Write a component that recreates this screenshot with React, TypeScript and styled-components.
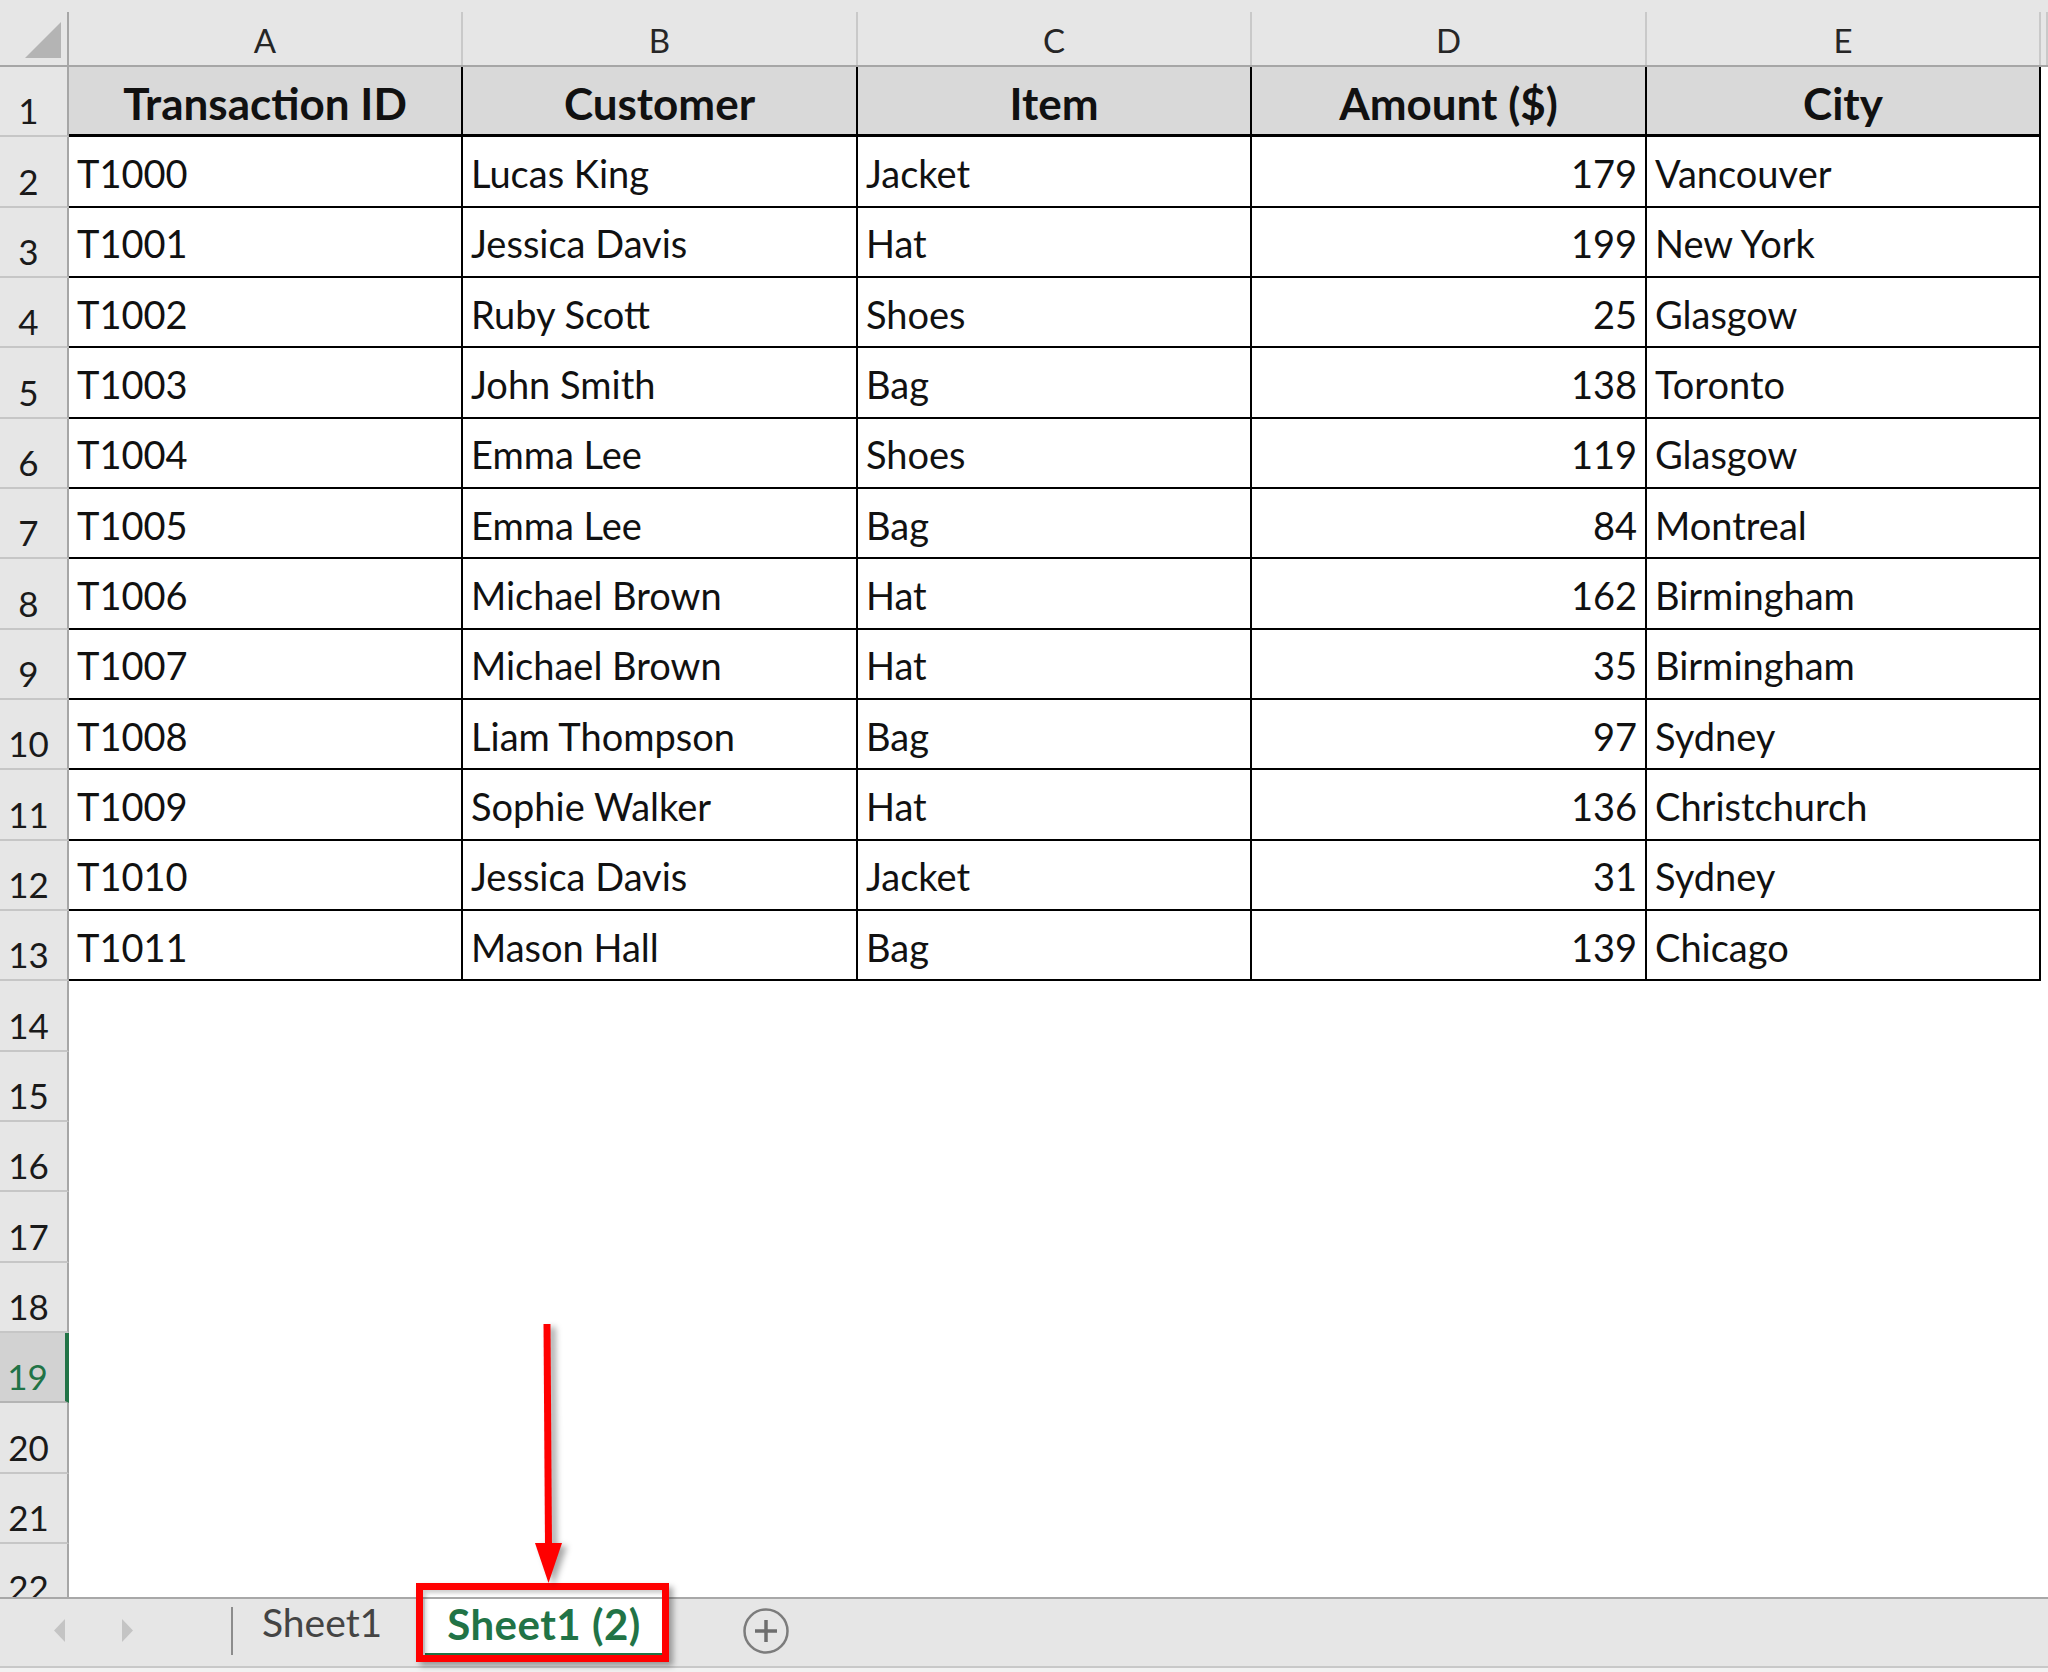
import styled, { createGlobalStyle } from "styled-components";

const GlobalStyle = createGlobalStyle`
  html, body {
    margin: 0;
    padding: 0;
    background: #ffffff;
  }
  body {
    font-family: Lato, "Open Sans", sans-serif;
  }
`;

const COLUMNS = "69px 394px 395px 394px 395px 394px 1fr";
const ROW_H = 70.33;
const TOTAL_ROWS = 22;

const letters = ["A", "B", "C", "D", "E"];
const headers = ["Transaction ID", "Customer", "Item", "Amount ($)", "City"];

const rows: [string, string, string, number, string][] = [
  ["T1000", "Lucas King", "Jacket", 179, "Vancouver"],
  ["T1001", "Jessica Davis", "Hat", 199, "New York"],
  ["T1002", "Ruby Scott", "Shoes", 25, "Glasgow"],
  ["T1003", "John Smith", "Bag", 138, "Toronto"],
  ["T1004", "Emma Lee", "Shoes", 119, "Glasgow"],
  ["T1005", "Emma Lee", "Bag", 84, "Montreal"],
  ["T1006", "Michael Brown", "Hat", 162, "Birmingham"],
  ["T1007", "Michael Brown", "Hat", 35, "Birmingham"],
  ["T1008", "Liam Thompson", "Bag", 97, "Sydney"],
  ["T1009", "Sophie Walker", "Hat", 136, "Christchurch"],
  ["T1010", "Jessica Davis", "Jacket", 31, "Sydney"],
  ["T1011", "Mason Hall", "Bag", 139, "Chicago"],
];

const SELECTED_ROW = 19;

const App = () => {
  const emptyCount = TOTAL_ROWS - rows.length - 1;

  return (
    <Page>
      <GlobalStyle />
      <Sheet>
        <ColumnHeaderBar>
          <Corner>
            <svg width="36" height="36" viewBox="0 0 36 36">
              <polygon points="36,0 36,36 0,36" fill="#b4b4b4" />
            </svg>
          </Corner>
          {letters.map((l) => (
            <ColumnLetter key={l}>{l}</ColumnLetter>
          ))}
          <ColumnLetter />
        </ColumnHeaderBar>

        <Row>
          <RowNumber>1</RowNumber>
          {headers.map((h) => (
            <Cell key={h} $head>
              {h}
            </Cell>
          ))}
          <Filler />
        </Row>

        {rows.map((r, i) => (
          <Row key={r[0]}>
            <RowNumber>{i + 2}</RowNumber>
            <Cell>{r[0]}</Cell>
            <Cell>{r[1]}</Cell>
            <Cell>{r[2]}</Cell>
            <Cell $align="right">{r[3]}</Cell>
            <Cell>{r[4]}</Cell>
            <Filler />
          </Row>
        ))}

        {Array.from({ length: emptyCount }).map((_, i) => {
          const n = rows.length + 2 + i;
          return (
            <Row key={n}>
              <RowNumber $selected={n === SELECTED_ROW}>{n}</RowNumber>
              <Filler />
            </Row>
          );
        })}
      </Sheet>

      <TabBar>
        <NavArrows>
          <svg width="11" height="23" viewBox="0 0 11 23">
            <polygon points="11,0 11,23 0,11.5" fill="#c4c4c4" />
          </svg>
          <svg width="11" height="23" viewBox="0 0 11 23">
            <polygon points="0,0 0,23 11,11.5" fill="#c4c4c4" />
          </svg>
        </NavArrows>
        <TabDivider />
        <SheetTab>Sheet1</SheetTab>
        <SheetTab $active>Sheet1 (2)</SheetTab>
        <PlusButton>
          <svg width="46" height="46" viewBox="0 0 46 46">
            <circle cx="23" cy="23" r="21.5" fill="none" stroke="#7c7c7c" strokeWidth="2.5" />
            <line x1="12" y1="23" x2="34" y2="23" stroke="#6e6e6e" strokeWidth="3.5" />
            <line x1="23" y1="12" x2="23" y2="34" stroke="#6e6e6e" strokeWidth="3.5" />
          </svg>
        </PlusButton>
      </TabBar>
      <BottomStrip />

      <RedBox />
      <ArrowMark width="60" height="275" viewBox="0 0 60 275">
        <line x1="27" y1="6" x2="28.5" y2="228" stroke="#ff0000" strokeWidth="7" />
        <polygon points="15,225 42,225 28.5,265" fill="#ff0000" />
      </ArrowMark>
    </Page>
  );
};

export default App;

const Page = styled.div`
  position: relative;
  width: 2048px;
  height: 1672px;
  overflow: hidden;
  display: flex;
  flex-direction: column;
  background: #ffffff;
`;

const Sheet = styled.div`
  flex: 1;
  overflow: hidden;
`;

const ColumnHeaderBar = styled.div`
  display: grid;
  grid-template-columns: ${COLUMNS};
  height: 67px;
  box-sizing: border-box;
  background: #e6e6e6;
  border-bottom: 2px solid #a6a6a6;
`;

const Corner = styled.div`
  margin-top: 12px;
  border-right: 2px solid #a6a6a6;
  display: flex;
  justify-content: flex-end;
  align-items: flex-end;
  padding: 0 6px 7px 0;
`;

const ColumnLetter = styled.div`
  margin-top: 12px;
  border-right: 2px solid #c9c9c9;
  display: flex;
  align-items: flex-end;
  justify-content: center;
  padding-bottom: 4px;
  font-size: 33px;
  line-height: 1.2;
  color: #262626;
`;

const Row = styled.div`
  display: grid;
  grid-template-columns: ${COLUMNS};
  height: ${ROW_H}px;
`;

const RowNumber = styled.div<{ $selected?: boolean }>`
  box-sizing: border-box;
  grid-column: 1;
  display: flex;
  align-items: flex-end;
  justify-content: center;
  padding: 0 10px 4px 0;
  background: ${(p) => (p.$selected ? "#d2d2d2" : "#e6e6e6")};
  color: ${(p) => (p.$selected ? "#217346" : "#1a1a1a")};
  border-right: ${(p) => (p.$selected ? "4px solid #217346" : "2px solid #a6a6a6")};
  border-bottom: 2px solid ${(p) => (p.$selected ? "#b4b4b4" : "#c6c6c6")};
  font-size: 35px;
  line-height: 1.2;
`;

const Cell = styled.div<{ $head?: boolean; $align?: "left" | "right" }>`
  box-sizing: border-box;
  display: flex;
  align-items: flex-end;
  justify-content: ${(p) =>
    p.$head ? "center" : p.$align === "right" ? "flex-end" : "flex-start"};
  padding: 0 8px ${(p) => (p.$head ? "5px" : "9px")} 8px;
  background: ${(p) => (p.$head ? "#d9d9d9" : "#ffffff")};
  border-right: 2px solid #000000;
  border-bottom: ${(p) => (p.$head ? "3px" : "2px")} solid #000000;
  font-size: ${(p) => (p.$head ? "44px" : "38px")};
  font-weight: ${(p) => (p.$head ? 700 : 400)};
  line-height: 1.2;
  color: #111111;
  white-space: nowrap;
  overflow: hidden;
`;

const Filler = styled.div`
  grid-column: -2;
  background: #ffffff;
`;

const TabBar = styled.div`
  height: 69px;
  box-sizing: border-box;
  border-top: 2px solid #a8a8a8;
  background: #e6e6e6;
  display: flex;
  align-items: flex-start;
`;

const NavArrows = styled.div`
  display: flex;
  align-items: center;
  gap: 57px;
  padding: 20px 0 0 54px;
`;

const TabDivider = styled.div`
  width: 2px;
  height: 48px;
  margin: 8px 0 0 98px;
  background: #8c8c8c;
`;

const SheetTab = styled.div<{ $active?: boolean }>`
  box-sizing: border-box;
  width: ${(p) => (p.$active ? "238px" : "192px")};
  height: 57px;
  display: flex;
  align-items: center;
  justify-content: ${(p) => (p.$active ? "center" : "flex-start")};
  padding: 0 0 ${(p) => (p.$active ? "4px" : "10px")} ${(p) => (p.$active ? "0" : "29px")};
  background: ${(p) => (p.$active ? "#ffffff" : "transparent")};
  border-bottom: ${(p) => (p.$active ? "3px solid #217346" : "none")};
  color: ${(p) => (p.$active ? "#217346" : "#444444")};
  font-size: ${(p) => (p.$active ? "42px" : "39px")};
  font-weight: ${(p) => (p.$active ? 700 : 400)};
  letter-spacing: ${(p) => (p.$active ? "0.5px" : "0")};
  line-height: 1.2;
  white-space: nowrap;
`;

const PlusButton = styled.div`
  margin: 9px 0 0 80px;
  width: 46px;
  height: 46px;
`;

const BottomStrip = styled.div`
  height: 6px;
  box-sizing: border-box;
  border-top: 2px solid #c8c8c8;
  background: #f2f2f2;
`;

const RedBox = styled.div`
  position: absolute;
  left: 416px;
  top: 1583px;
  width: 253px;
  height: 79px;
  box-sizing: border-box;
  border: 7px solid #ff0000;
  box-shadow: 4px 4px 6px rgba(0, 0, 0, 0.35), inset 3px 3px 4px rgba(0, 0, 0, 0.2);
`;

const ArrowMark = styled.svg`
  position: absolute;
  left: 520px;
  top: 1318px;
  filter: drop-shadow(5px 3px 3px rgba(0, 0, 0, 0.35));
`;
